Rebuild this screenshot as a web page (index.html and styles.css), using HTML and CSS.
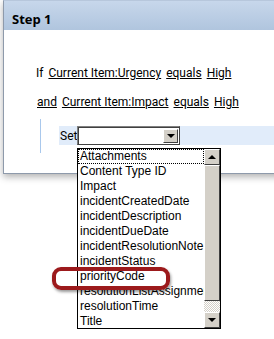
FILE: index.html
```html
<!DOCTYPE html>
<html lang="en">
<head>
    <meta charset="UTF-8">
    <title>Workflow Step 1</title>
    <link rel="stylesheet" href="styles.css">
</head>
<body>
    <div class="panel">
        <div class="panel-head">Step 1</div>
        <div class="panel-body">
            <p class="rule"><span>If</span> <a href="#">Current Item:Urgency</a> <a href="#">equals</a> <a href="#">High</a></p>
            <p class="rule rule-and"><a href="#">and</a> <a href="#">Current Item:Impact</a> <a href="#">equals</a> <a href="#">High</a></p>

            <div class="actions">
                <div class="action-row">
                    <span class="action-label">Set</span>
                    <div class="select">
                        <span class="select-value"></span>
                        <span class="select-btn"><span class="arrow-down"></span></span>
                    </div>
                </div>
            </div>
        </div>
    </div>

    <div class="dropdown">
        <ul class="options">
            <li class="focused">Attachments</li>
            <li>Content Type ID</li>
            <li>Impact</li>
            <li>incidentCreatedDate</li>
            <li>incidentDescription</li>
            <li>incidentDueDate</li>
            <li>incidentResolutionNote</li>
            <li>incidentStatus</li>
            <li>priorityCode</li>
            <li>resolutionListAssignment</li>
            <li>resolutionTime</li>
            <li>Title</li>
        </ul>
        <div class="scrollbar">
            <span class="sb-btn"><span class="arrow-up"></span></span>
            <span class="sb-thumb"></span>
            <span class="sb-track"></span>
            <span class="sb-btn"><span class="arrow-down"></span></span>
        </div>
    </div>

    <div class="callout"></div>
</body>
</html>
```

FILE: styles.css
```css
* {
    margin: 0;
    padding: 0;
    box-sizing: border-box;
}

body {
    font-family: Roboto, "Noto Sans", sans-serif;
    font-size: 12px;
    color: #000;
    background: #fff;
    width: 274px;
    height: 339px;
    overflow: hidden;
    position: relative;
}

.panel {
    margin-left: 3px;
    width: 320px;
    border: 1px solid #8e9aab;
    border-top-color: #b7c7dc;
    box-shadow: 0 3px 7px rgba(0, 0, 0, 0.3);
    background: #fff;
}

.panel-head {
    height: 29px;
    background: linear-gradient(#c7d7eb, #b0c5de);
    padding: 10px 0 0 8px;
    font-family: "Open Sans", sans-serif;
    font-weight: 700;
    font-size: 13px;
    line-height: 16px;
    color: #000;
}

.panel-body {
    padding: 35px 0 20px 0;
}

.rule {
    display: flex;
    gap: 5px;
    padding-left: 32px;
    line-height: 16px;
}

.rule-and {
    margin-top: 13px;
    padding-left: 33px;
}

.rule a {
    color: #000;
    text-decoration: underline;
}

.actions {
    margin: 9px 0 0 36px;
    border-left: 1px solid #a9c8ec;
    padding: 7px 0 8px 18px;
}

.action-row {
    display: flex;
    align-items: center;
    height: 19px;
    background: #e1ecfa;
}

.action-label {
    padding-left: 1px;
    width: 18px;
}

.select {
    display: flex;
    width: 103px;
    height: 19px;
    border: 1px solid #404040;
    border-top-color: #808080;
    border-left-color: #808080;
    background: #fff;
    box-shadow: inset 1px 1px 0 #404040;
    padding: 2px 1px 1px 2px;
}

.select-value {
    flex: 1;
}

.select-btn {
    width: 15px;
    height: 14px;
    background: #d4d0c8;
    border: 1px solid #fff;
    border-right-color: #404040;
    border-bottom-color: #404040;
    display: flex;
    align-items: center;
    justify-content: center;
}

.arrow-down,
.arrow-up {
    width: 0;
    height: 0;
    border-left: 4px solid transparent;
    border-right: 4px solid transparent;
}

.arrow-down {
    border-top: 4px solid #000;
}

.arrow-up {
    border-bottom: 4px solid #000;
}

/* open list of the select, drawn over the panel */
.dropdown {
    position: absolute;
    left: 77px;
    top: 148px;
    width: 144px;
    height: 181px;
    border: 1px solid #000;
    background: #fff;
    display: flex;
}

.options {
    list-style: none;
    flex: 1;
    overflow: hidden;
    font-family: "Liberation Sans", sans-serif;
    font-size: 12px;
}

.options li {
    height: 15px;
    line-height: 15px;
    padding-left: 2px;
    white-space: nowrap;
    overflow: hidden;
}

.options li.focused {
    outline: 1px dotted #000;
    outline-offset: -1px;
}

.scrollbar {
    width: 16px;
    display: flex;
    flex-direction: column;
}

.sb-btn {
    height: 16px;
    background: #d4d0c8;
    border: 1px solid #fff;
    border-right-color: #404040;
    border-bottom-color: #404040;
    display: flex;
    align-items: center;
    justify-content: center;
}

.sb-thumb {
    height: 136px;
    background: #d4d0c8;
    border: 1px solid #fff;
    border-right-color: #404040;
    border-bottom-color: #404040;
}

.sb-track {
    flex: 1;
    background: repeating-conic-gradient(#d4d0c8 0 25%, #fff 0 50%) 0 0 / 2px 2px;
}

/* red annotation round priorityCode */
.callout {
    position: absolute;
    left: 52px;
    top: 267px;
    width: 118px;
    height: 23px;
    border: 4px solid #9c1a1c;
    border-radius: 9px;
    box-shadow: 1px 2px 3px rgba(0, 0, 0, 0.4);
}
```
